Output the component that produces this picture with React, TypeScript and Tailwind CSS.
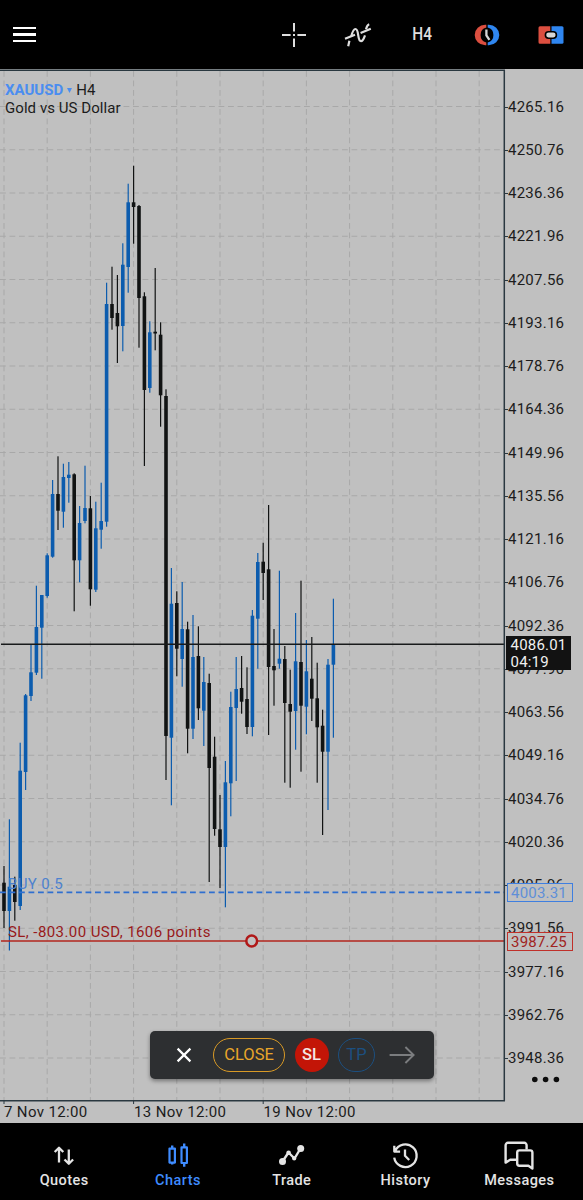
import type { ReactNode } from 'react';

// x is derived from the index; values are [wickTop, bodyTop, bodyBottom, wickBottom]
type Candle = ['up' | 'down', number, number, number, number];

const candles: Candle[] = [
  ['down', 866, 882.7, 911, 928],
  ['up', 819.3, 886.7, 911, 950.5],
  ['down', 876.7, 885, 902, 920.7],
  ['up', 742.7, 770.7, 906, 910],
  ['up', 694, 695.3, 772, 790],
  ['up', 644, 672.3, 696, 701],
  ['up', 585.7, 627, 672.7, 675],
  ['up', 595, 595, 627.7, 678.7],
  ['up', 553.3, 555.3, 596, 597.7],
  ['up', 480, 494, 556.7, 557.7],
  ['down', 456.3, 494, 510.7, 530],
  ['up', 463.7, 477, 511.7, 527.7],
  ['up', 462, 474.7, 478, 502.7],
  ['down', 473.3, 474.3, 560.3, 611.3],
  ['up', 506, 523, 560.3, 582.3],
  ['up', 465.7, 508, 521, 523.3],
  ['down', 496, 508.3, 589.3, 605.7],
  ['up', 501.7, 528.3, 589.7, 592],
  ['up', 482.7, 521, 529.7, 548.7],
  ['up', 282.7, 304, 521.7, 526.7],
  ['down', 266.7, 304, 318, 329.7],
  ['down', 275, 313, 326.3, 363],
  ['up', 243.3, 264.7, 326, 351.3],
  ['up', 183.7, 202.3, 267, 292.7],
  ['down', 165.7, 202.3, 207, 243.7],
  ['down', 205, 206, 298, 347.7],
  ['down', 292.3, 296.3, 390, 466],
  ['up', 321.3, 332.3, 388, 392.7],
  ['down', 268, 331.7, 333.5, 350.3],
  ['down', 322.3, 334.7, 395.3, 426.7],
  ['down', 389.3, 396, 736, 780],
  ['up', 568, 603.7, 737.7, 805.3],
  ['down', 591.3, 603, 648.7, 676.3],
  ['up', 582, 629, 659, 686.7],
  ['down', 621.7, 629.3, 728.7, 753.3],
  ['up', 615, 657, 728.7, 739],
  ['down', 626.3, 656, 708.3, 720],
  ['up', 657, 682, 710.7, 746],
  ['down', 673.7, 683, 768, 882],
  ['down', 736.7, 756.7, 829, 835.7],
  ['down', 795, 829.3, 847, 888],
  ['up', 761, 782.3, 847, 907.3],
  ['up', 691.7, 707, 783.3, 816.3],
  ['up', 657, 689, 708, 781],
  ['down', 656, 688, 701.7, 713.7],
  ['down', 667.3, 699, 727, 734],
  ['up', 610, 615.7, 727, 736.3],
  ['up', 553, 562, 618.7, 668.7],
  ['down', 542.7, 561.7, 573, 600],
  ['down', 505, 569.3, 667, 735],
  ['down', 629, 666, 670.3, 705.7],
  ['up', 570.7, 658.7, 663.7, 668.7],
  ['down', 646, 659, 703, 782.7],
  ['down', 669.7, 704, 711.7, 787.7],
  ['up', 613, 661.3, 711, 749.7],
  ['down', 580.7, 662, 705.7, 771.7],
  ['up', 640, 671.3, 706.7, 734.3],
  ['down', 637, 678.7, 698.7, 721],
  ['down', 662.7, 698.3, 727.3, 782.7],
  ['down', 709.7, 725.7, 751.7, 835],
  ['up', 659, 664.7, 751.7, 810],
  ['up', 598.7, 644, 664.7, 737.7],
];

const prices = Array.from({ length: 23 }, (_, i) => (4265.16 - i * 14.4).toFixed(2));
const gridX = Array.from({ length: 12 }, (_, i) => 4 + i * 43.2);
const gridY = prices.map((_, i) => 106.5 + i * 43.25);

const HeaderButton = ({ children }: { children: ReactNode }) => (
  <button className="flex h-full w-[64.4px] items-center justify-center">{children}</button>
);

const Header = () => (
  <header className="flex h-[69px] shrink-0 items-center justify-between bg-black pl-[13px] text-[#dedede]">
    <button aria-label="Menu" className="flex flex-col gap-[4px]">
      <span className="h-[2.4px] w-[23px] bg-white" />
      <span className="h-[2.4px] w-[23px] bg-white" />
      <span className="h-[2.4px] w-[23px] bg-white" />
    </button>
    <div className="-mr-[0.6px] flex h-full">
      <HeaderButton>
        <svg width="26" height="26" viewBox="0 0 26 26" fill="none" stroke="currentColor" strokeWidth="2">
          <path d="M13 1v8.6M13 16.4V25M1 13h8.6M16.4 13H25M12 13h2" />
        </svg>
      </HeaderButton>
      <HeaderButton>
        <svg width="28" height="26" viewBox="0 0 28 26" fill="none" stroke="currentColor" strokeWidth="2.2">
          <path d="M4.2 24.2 5.4 18.8M7.3 14.2C8.6 9.4 9.8 7 11.4 7c4 0 1.6 12.2 5.6 12.2 1.9 0 2.9-2.6 4-5.8M22 7.2c.7-2.6 1.6-4.5 3.2-5" />
          <path d="M1 16.8 11 12.8M16.6 11 26.8 6.8" />
        </svg>
      </HeaderButton>
      <HeaderButton>
        <span className="scale-x-[0.88] text-[17.5px] font-medium">H4</span>
      </HeaderButton>
      <HeaderButton>
        <svg width="26" height="24" viewBox="0 0 26 24" fill="none">
          <path d="M12.3 1.8H11.2A10.5 10.2 0 0 0 11.2 22.2H12.3V19.4A7.4 7.6 0 0 1 12.3 4.6Z" fill="#dc4f40" />
          <path d="M13.7 1.8H14.8A10.5 10.2 0 0 1 14.8 22.2H13.7V19.4A7.4 7.6 0 0 0 13.7 4.6Z" fill="#2f86f0" />
          <path d="M12.4 6.6v5.8l3 4.4" stroke="#d6d6d6" strokeWidth="2.3" />
        </svg>
      </HeaderButton>
      <HeaderButton>
        <svg width="26" height="20" viewBox="0 0 26 20">
          <path d="M2 1.3h10.3v17.4H2a1.5 1.5 0 0 1-1.5-1.5V2.8A1.5 1.5 0 0 1 2 1.3Z" fill="#dc4f40" />
          <path d="M13.5 1.3H24a1.5 1.5 0 0 1 1.5 1.5v14.4a1.5 1.5 0 0 1-1.5 1.5H13.5Z" fill="#2f86f0" />
          <rect x="7.4" y="6.8" width="11" height="6.4" rx="3.2" fill="#d6d6d6" stroke="#000" strokeWidth="1.6" />
        </svg>
      </HeaderButton>
    </div>
  </header>
);

const Chart = () => (
  <svg className="block" width="506" height="1036" viewBox="0 69 506 1036">
    <g stroke="#a8a8a8" strokeWidth="1" strokeDasharray="5.8 3.7">
      {gridX.map((x) => (
        <line key={x} x1={x} x2={x} y1="71" y2="1100" />
      ))}
      {gridY.map((y) => (
        <line key={y} x1="0" x2="504" y1={y} y2={y} />
      ))}
    </g>
    {candles.map(([dir, wickTop, top, bottom, wickBottom], i) => {
      const x = 4 + i * 5.4;
      return (
        <g key={i} fill={dir === 'up' ? '#0c5cae' : '#111313'}>
          <rect x={x - 0.6} y={wickTop} width="1.2" height={wickBottom - wickTop} />
          <rect x={x - 1.8} y={top} width="3.6" height={bottom - top} />
        </g>
      );
    })}
    <path d="M1 644.2H504" stroke="#181a1b" strokeWidth="1.4" />
    <path d="M0 892.4H504" stroke="#2f6fd0" strokeWidth="1.7" strokeDasharray="5.8 3.7" />
    <path d="M1 941H504" stroke="#b3261e" strokeWidth="1.6" />
    <circle cx="251.7" cy="941" r="5.4" fill="#c2c2c2" stroke="#b01818" strokeWidth="2.5" />
    <path d="M0 70.3H504.3V1100.7H0" fill="none" stroke="#2a3840" strokeWidth="1.5" />
    <path d="M4 1101v3M133.6 1101v3M263.2 1101v3" stroke="#2a3840" strokeWidth="1" />
  </svg>
);

const PriceAxis = () => (
  <div className="flex w-[77px] flex-col pt-[16.4px]">
    {prices.map((price) => (
      <div key={price} className="flex h-[43.25px] shrink-0 items-center">
        <span className="-ml-[1px] h-px w-[3px] bg-[#2a3840]" />
        <span className="text-[15px] leading-none tracking-[0.25px]">{price}</span>
      </div>
    ))}
  </div>
);

const TradePanel = () => (
  <div className="absolute top-[962px] left-[150px] flex h-[48px] w-[284px] items-center rounded-[5px] bg-[#2d2f31] shadow-[0_2px_4px_rgba(0,0,0,0.4)]">
    <svg className="ml-[26px]" width="16" height="16" viewBox="0 0 16 16" stroke="#fff" strokeWidth="2.2">
      <path d="M1.6 1.6 14.4 14.4M14.4 1.6 1.6 14.4" />
    </svg>
    <button className="ml-[21px] h-[34px] w-[72px] rounded-full border border-[#d99a26] pt-px text-[16.5px] text-[#e8a52a]">
      CLOSE
    </button>
    <button className="ml-[10px] size-[34px] rounded-full bg-[#c31507] pt-px text-[16.5px] font-medium text-[#f3e6e4]">
      <span className="-ml-px">SL</span>
    </button>
    <button className="ml-[9px] h-[34px] w-[37px] rounded-full border border-[#1c4f80] pt-px text-[16.5px] text-[#1c4f80]">
      TP
    </button>
    <svg className="ml-[14px]" width="26" height="18" viewBox="0 0 26 18" fill="none" stroke="#7b7d7f" strokeWidth="1.9">
      <path d="M0.6 9H24.4M16.4 1 24.6 9l-8.2 8" />
    </svg>
  </div>
);

const DateAxis = () => (
  <div className="absolute top-[1034px] left-[4px] flex text-[15px] leading-[18px] tracking-[0.35px]">
    <span className="w-[130px]">7 Nov 12:00</span>
    <span className="w-[129.5px]">13 Nov 12:00</span>
    <span>19 Nov 12:00</span>
  </div>
);

const tabs = [
  {
    label: 'Quotes',
    icon: (
      <path d="M10 21.5V7M5.7 11 10 6.7l4.3 4.3M19.8 8.5v14M15.5 18.5l4.3 4.3 4.3-4.3" strokeWidth="2.3" />
    ),
  },
  {
    label: 'Charts',
    icon: (
      <>
        <path d="M9.2 4.5v3.6M9.2 21v2.6M21.2 2.6v4.2M21.2 22v3.8" strokeWidth="2.4" />
        <path d="M6.5 7.6h5.4v14H6.5zM18.5 6.4h5.4v15.6h-5.4z" strokeWidth="2.2" />
      </>
    ),
  },
  {
    label: 'Trade',
    icon: (
      <>
        <path d="M6.5 20.5 12.5 11.5 18.5 17.5 24.5 7.5" strokeWidth="2.4" />
        <g fill="currentColor" stroke="none">
          <circle cx="6.5" cy="20.5" r="3.5" />
          <circle cx="12.6" cy="11.7" r="2.3" />
          <circle cx="18.2" cy="17.4" r="2.1" />
          <circle cx="24.7" cy="7.5" r="3.5" />
        </g>
      </>
    ),
  },
  {
    label: 'History',
    icon: (
      <>
        <path d="M5 10.2A11.3 11.3 0 1 1 4.2 16.6M4.3 4.8v5.8h5.8" strokeWidth="2.3" />
        <path d="M15 8.4v6.4l4.2 4.2" strokeWidth="2.3" />
      </>
    ),
  },
  {
    label: 'Messages',
    icon: (
      <>
        <path d="M12.4 18.8H6.2L1.6 21.6V4.2A2.4 2.4 0 0 1 4 1.8h16.2a2.4 2.4 0 0 1 2.4 2.4v4.4" strokeWidth="2.4" />
        <path d="M15.4 9.4h10.8a2.2 2.2 0 0 1 2.2 2.2v16l-4-2.8h-9a2.2 2.2 0 0 1-2.2-2.2v-11a2.2 2.2 0 0 1 2.2-2.2Z" strokeWidth="2.4" />
      </>
    ),
  },
];

const BottomNav = () => (
  <nav className="flex h-[77px] shrink-0 bg-black px-[7px] pt-[18px]">
    {tabs.map(({ label, icon }) => (
      <button
        key={label}
        className={`flex flex-1 flex-col items-center ${label === 'Charts' ? 'text-[#3f8cff]' : 'text-[#e4e4e4]'}`}
      >
        <svg width="30" height="30" viewBox="0 0 30 30" fill="none" stroke="currentColor" strokeLinejoin="round">
          {icon}
        </svg>
        <span className="mt-px pl-[0.5px] text-[14.5px] leading-[18px] font-medium tracking-[0.45px]">{label}</span>
      </button>
    ))}
  </nav>
);

export default function App() {
  return (
    <div className="flex h-[1200px] w-[583px] flex-col overflow-hidden bg-black font-['Roboto',sans-serif]">
      <Header />
      <main className="relative flex h-[1054px] shrink-0 overflow-hidden bg-[#c0c0c0] text-[#1c1c1c]">
        <Chart />
        <PriceAxis />

        <div className="absolute top-[12px] left-[5px] text-[15px] leading-[18px]">
          <div className="flex items-center">
            <span className="font-bold text-[#4a8df0]">XAUUSD</span>
            <svg className="mx-[4px]" width="5" height="5" viewBox="0 0 5 5" fill="#4a8df0">
              <path d="M0 0h5L2.5 5Z" />
            </svg>
            <span>H4</span>
          </div>
          <div className="tracking-[0.06px]">Gold vs US Dollar</div>
        </div>

        <span className="absolute top-[806px] left-[8px] text-[15px] leading-[18px] tracking-[0.35px] text-[#4d82cf]">
          BUY 0.5
        </span>
        <span className="absolute top-[854px] left-[8px] text-[15px] leading-[18px] tracking-[0.42px] text-[#98191b]">
          SL, -803.00 USD, 1606 points
        </span>

        <div className="absolute top-[567px] left-[506px] h-[34px] w-[65px] bg-[#121212] pt-px pl-[4.5px] text-[15px] leading-[17px] tracking-[0.2px] text-[#f0f0f0]">
          <div>4086.01</div>
          <div>04:19</div>
        </div>
        <div className="absolute top-[814px] left-[507px] h-[19px] w-[66px] border border-[#3f7fe0] bg-[#c0c0c0] pl-[3px] text-[15px] leading-[18px] tracking-[0.2px] text-[#5f8fd8]">
          4003.31
        </div>
        <div className="absolute top-[863px] left-[507px] h-[19px] w-[66px] border border-[#c0302a] bg-[#c0c0c0] pl-[3px] text-[15px] leading-[18px] tracking-[0.2px] text-[#a02422]">
          3987.25
        </div>

        <svg className="absolute top-[1007px] left-[531px]" width="30" height="7" viewBox="0 0 30 7" fill="#0c0c0c">
          <circle cx="3.8" cy="3.5" r="2.8" />
          <circle cx="14.6" cy="3.5" r="2.8" />
          <circle cx="25.4" cy="3.5" r="2.8" />
        </svg>

        <DateAxis />
        <TradePanel />
      </main>
      <BottomNav />
    </div>
  );
}
